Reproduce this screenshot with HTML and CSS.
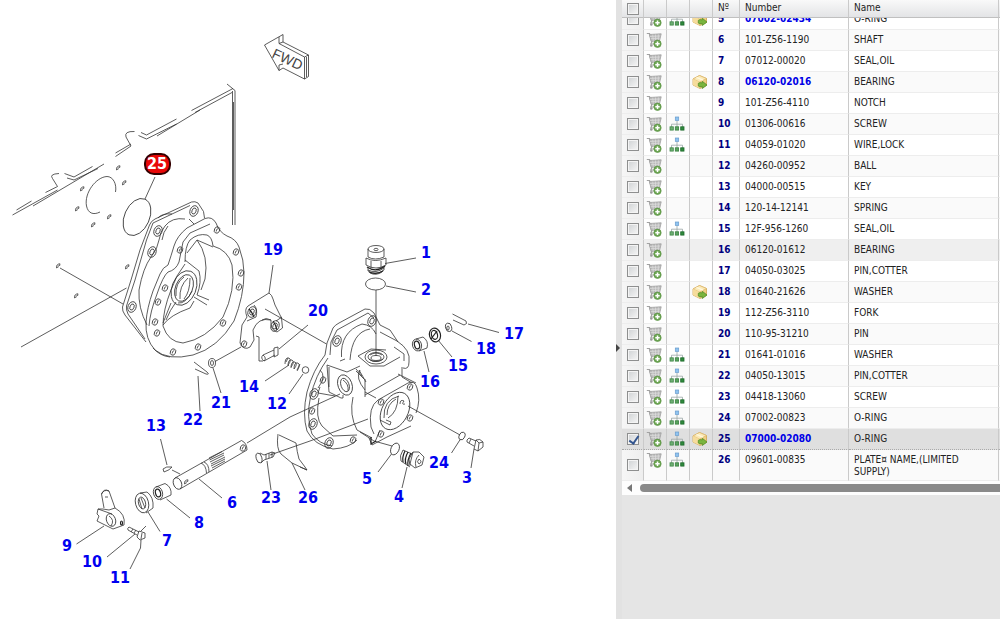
FILE: index.html
```html
<!DOCTYPE html>
<html lang="en">
<head>
<meta charset="utf-8">
<title>Parts catalogue</title>
<link rel="stylesheet" href="styles.css">
</head>
<body>
<svg class="sprite" aria-hidden="true">
  <symbol id="cart" viewBox="0 0 16 16">
    <path d="M.8 1.500h2.700l2.300 8.500-1 2h7" fill="none" stroke="#a2a2a2" stroke-width="1.200"/>
    <path d="M3.300 2.500 15.200 1.800 13.600 8.500 5.200 9.500z" fill="#b9b9b9" stroke="#a0a0a0" stroke-width=".8"/>
    <path d="M4 4.500 14.200 4M4.700 6.700 13.700 6.200M9.500 2.500v6M12.300 2.300v6M6.700 2.700l.6 6" stroke="#dedede" stroke-width=".7"/>
    <circle cx="5.300" cy="13.500" r="1.300" fill="#999"/>
    <circle cx="11.500" cy="11.800" r="3.700" fill="#6da653" stroke="#568f3e" stroke-width=".6"/>
    <path d="M11.500 9.600v4.400M9.300 11.800h4.400" stroke="#fff" stroke-width="1.500"/>
  </symbol>
  <symbol id="tree" viewBox="0 0 16 16">
    <path d="M8 4.500V11M2.500 11V8.200h11V11" fill="none" stroke="#9aa6a6" stroke-width=".8"/>
    <rect x="6.300" y="1" width="3.400" height="3.400" fill="#8fc4f0" stroke="#6a9ccc" stroke-width=".7"/>
    <rect x="1" y="10.800" width="3.300" height="3.300" fill="#6fae74" stroke="#3f8848" stroke-width=".8"/>
    <rect x="6.300" y="10.800" width="3.300" height="3.300" fill="#5aa45f" stroke="#37803f" stroke-width=".8"/>
    <rect x="11.700" y="10.800" width="3.300" height="3.300" fill="#2f8a3c" stroke="#1f6a2c" stroke-width=".8"/>
  </symbol>
  <symbol id="box" viewBox="0 0 16 16">
    <path d="M1 5 7.500 1.500 14.500 4.500v7L8 14.500l-7-3.500z" fill="#f0cf85" stroke="#d0a44f" stroke-width=".8"/>
    <path d="M1 5 7.500 1.500 14.500 4.500 7.500 8z" fill="#fbe9b8" stroke="#dab465" stroke-width=".6"/>
    <path d="M7.500 8V14.300L1 11V5z" fill="#f6dc9c"/>
    <path d="M4.500 3.300 11 6.200" stroke="#fff8dd" stroke-width="1.300"/>
    <path d="M6.300 9.300Q8 8 10.300 9V7.300l4.700 3.700-4.700 3.500v-2Q7.500 13.500 6.300 12z" fill="#7ab53e" stroke="#558f2a" stroke-width=".8"/>
  </symbol>
</svg>
<main class="layout">
  <section class="drawing" aria-label="Assembly drawing">
    <svg class="scheme" viewBox="0 0 616 619" role="img" aria-label="Exploded view of the gear housing">
      <defs>
        <g id="hole"><ellipse rx="2.600" ry="3.300" transform="rotate(25)"/><path d="M-.8 1.500Q-1-1 1.300-1.500"/></g>
        <g id="bolt-hole"><ellipse rx="4" ry="5.500" transform="rotate(22)"/><ellipse rx="2" ry="3.200" transform="rotate(22)"/></g>
        <path id="tick" d="M-1.500 2.200Q-2-2 2-2.200L1.500 0M-.5 2 .5-.5"/>
      </defs>
      <g class="ink">
        <path d="M264.500 45 283 34.500V42L308.500 55V76.500L304.500 79 283 68 279 70.500ZM283 42l-4 1.500 25.500 13.500V79M304.500 57l4-2M279 43.500V37M279 70.500V65l4-1M306.500 57v20"/>
        <path d="M227 84 235 90.500V225M232.500 91V225M233.500 102V210M233 88.500 191.500 110.500M232 92.500 195 112.500M200 110 157 136M176.500 119 146.500 135 141 132.500M176.500 124 146.500 139 138.500 135.500M134.500 131.500Q124 131 126 137L131 146 115.500 156.500M131 144 115.500 153M104 164 33 206M92.500 166.500 74 177 64.500 173.500M98 168.500 74 180 67 178M59 173.500Q49 174 52.500 178.500L57.500 186.500 45.500 192.500M57.500 190 12.500 215M31.500 201 16.500 210"/>
        <path d="M115.500 192C117 184 113 176.500 107 176.500 96 177 84 193 86.500 206 88 213 93 215.500 100 212"/>
        <ellipse cx="137" cy="217" rx="12.500" ry="19.500" transform="rotate(24 137 217)"/>
        <path d="M155 177 145 199M60 268 123 304M21 347 126.500 288"/>
        <use href="#tick" x="118" y="168"/><use href="#tick" x="124" y="183"/><use href="#tick" x="82" y="189"/><use href="#tick" x="77" y="209"/><use href="#tick" x="109" y="217"/><use href="#tick" x="93" y="225"/><use href="#tick" x="127" y="267"/><use href="#tick" x="76" y="296"/><use href="#tick" x="58" y="266"/>

        <path d="M146 342 125 315Q122 311 122.500 307L131 280 140 250 149.500 225Q151 221 155 219L191.500 202Q195 201 198 203L203.500 211.500 204.500 218M145 339 128 314Q126 310 126.500 306L135 280 146.500 240 153 223 190 205.500M158 218Q162 213 172 214M189 219 194 224"/>
        <use href="#bolt-hole" x="194" y="211"/><use href="#bolt-hole" x="158" y="231"/><use href="#bolt-hole" x="152" y="252"/><use href="#bolt-hole" x="132" y="307"/>
        <path d="M185 219Q172 217 165 226 160 232 159 240 158 248 151 257 143 268 139 290 138 308 147 325M162 240Q163 232 168 226"/>
        <path d="M146 322Q147 308 153 291L160 274Q163 267 168 265 171 256 174 246 177 236 187 228L205 218.500Q212 216 216 223 219 232 227 236 236 239 239 247 244 260 244 273 244 296 234 321 218 348 193 355 168 361 155 350 145 339 146 322ZM149 326Q150 312 157 294 163 276 168 272 176 270 179 262L183 242 190 233 210 224M153 348Q160 356 170 357"/>
        <path d="M185 262Q185 246 190 240 198 233 207 235 212 237 213 246 228 250 232 265 236 290 223 317 206 339 183 343 168 342 163 326 163 310 171 290 176 275 185 264M197 240 213 247M197 240Q209 256 205 279L201 290M187 253 197 240M185 260 199 271Q202 282 197 295L209 300M194 297 207 305M163 325Q170 315 190 308M171 303 163 323M190 308 194 301M176 302Q170 310 166 320"/>
        <ellipse cx="184" cy="288" rx="12" ry="18" transform="rotate(22 184 288)"/>
        <ellipse cx="184" cy="288" rx="8.500" ry="14" transform="rotate(22 184 288)"/>
        <path d="M176 296Q175 283 184 277M180 299Q179 286 188 278M184 299Q190 292 190 278M178 303Q186 304 192 291"/>
        <use href="#hole" x="180" y="250"/><use href="#hole" x="217" y="230"/><use href="#hole" x="236" y="252"/><use href="#hole" x="241" y="273"/><use href="#hole" x="239" y="287"/><use href="#hole" x="223" y="323"/><use href="#hole" x="198" y="347"/><use href="#hole" x="173" y="352"/><use href="#hole" x="157" y="333"/><use href="#hole" x="155" y="322"/><use href="#hole" x="158" y="302"/><use href="#hole" x="165" y="288"/>

        <path d="M273 265 269 293M248 306 269 293Q272 295 273 299L275 305 281.500 318 282.500 328 277 332Q270 330 271 320 258 317 253 330L254 340 250 347Q244 351 240 343L242 325 247 317Q244 309 248 306M254 305Q258 309 256 317L247 321M265 309 326.500 344M256 336l3 1v24l4 0M271 320Q266 317 262 320M282 317 276 321"/>
        <use href="#bolt-hole" x="252" y="312"/><use href="#bolt-hole" x="275" y="326"/><use href="#hole" x="244" y="344"/>
        <path class="bold" d="M249 309Q252 312 254 317M273 321Q276 325 277 330"/>
        <path d="M263 355 274 350M264 361 275 355M263 355Q260 358 264 361 267 358 263 355M274 348 278 347V355L274 357ZM308 325 279 349M265 381 289 365M289 394 303 374"/>
        <path d="M285 364Q285 357 289 358 292 360 288 365M288 366Q288 359 292 360 295 362 291 367M291 368Q291 361 295 362 298 364 294 369M294 369Q294 362 298 363 301 365 297 371M286 362 288 358M297 370 300 364"/>
        <circle cx="305.500" cy="370" r="3.300"/>
        <ellipse cx="212" cy="363" rx="3.500" ry="4.500"/><ellipse cx="212" cy="363" rx="1.500" ry="2.500"/>
        <path d="M215 361.500 241 347M221 393 213 368M194 362 207 372M195 369 206 374Q210 375 207 372M200 411 198 376M160.500 439 167 465"/>

        <path d="M368 249V257M384 249V257M366 258Q375 263 386 258V265Q376 271 366 265ZM371 261V268M381 261V268M368 257Q375 261 384 257M368 268V271Q376 276 384 270V267M368 270Q376 274 384 268M370 273Q376 276 382 272M385 263.500 416 258M386 286 416 292M376 290V356"/>
        <ellipse cx="376" cy="249" rx="8" ry="3.500"/><ellipse cx="376" cy="249.500" rx="2" ry="1.200"/><ellipse cx="375.500" cy="284" rx="10" ry="6"/>
        <path class="bold" d="M367 267Q376 273 385 266M369 272Q376 275 383 271"/>

        <path d="M325 355 327 343 333 328Q335 325 339 323L365 309Q370 308 374 313L380 325 390 330 398 342M330 355 331 342 337 330 368 313 374 318M325 355Q313 370 307 392 302 414 307 431 314 445 333 449 349 448 357 440M328 358Q315 376 310.500 397 306 417 312 434 319 444 332 446"/>
        <path d="M341.500 357Q340 332 362 324M350 360Q352 332 370 329M362 324Q372 325 376 334M380 332 397 341Q411 350 409 362 409 370 403 368M402 367V377M394 347 404 354V361M358 356 371 349 386 350M358 356 370 366 384 366 400 357M345 359 340 361M327 365 347 372 360 366M360 370Q355 378 365 390M365 397V379M362 376 356 369M365 395 400 375M398 374 416 383M365 392 376 398M402 377 412 383"/>
        <ellipse cx="376" cy="357" rx="11" ry="7"/><ellipse cx="376" cy="357" rx="8" ry="4.500"/><ellipse cx="376" cy="358" rx="5" ry="2.500"/>
        <path d="M369 359Q375 364 383 359M370 355Q376 351 382 355"/>
        <ellipse cx="345" cy="385" rx="7" ry="10.500" transform="rotate(-20 345 385)"/><ellipse cx="345" cy="385" rx="4" ry="7" transform="rotate(-20 345 385)"/>
        <path d="M343 380Q349 384 348 391M327 365 329 392 341 398H343V395M329 367V387M320 387 318 393 335 396M353 397Q349 415 357 430M319 398Q315 418 322 426L333 436 357 435M357 430 372 438M360 432 374 441 392 446M320 370Q327 376 318 388"/>
        <use href="#bolt-hole" x="337" y="341"/><use href="#bolt-hole" x="372" y="321"/><use href="#hole" x="323" y="380"/><use href="#bolt-hole" x="314" y="394"/><use href="#hole" x="312" y="411"/><use href="#bolt-hole" x="313" y="424"/><use href="#bolt-hole" x="329" y="443"/><use href="#hole" x="353" y="440"/>
        <path d="M371 427Q368 407 378 400L408 383Q415 380 417 388 421 400 416 413M411 426 387 437 372 445 369 438M371 427 374 434M375 442 380 430M356 371 364 379M359 370 366 382"/>
        <ellipse cx="395" cy="411" rx="13" ry="20" transform="rotate(28 395 411)"/>
        <path d="M384 418Q383 400 399 396M387 415Q387 404 396 399M386 420 391 422 390 425 380 420M388 418Q398 412 398 396M400 404Q400 399 404 401 401 405 405 404"/>
        <use href="#hole" x="381" y="402"/><use href="#hole" x="410" y="387"/><use href="#hole" x="410" y="418"/><use href="#hole" x="381" y="434"/>
        <path class="bold" d="M371 437V444L376 441"/>
        <path d="M247 443 290 417 340 394M270 455 310 441 368 419M408 406 460 435"/>

        <ellipse cx="462" cy="436" rx="2.800" ry="4" transform="rotate(25 462 436)"/><ellipse cx="395" cy="449" rx="4" ry="6.200" transform="rotate(25 395 449)"/>
        <path d="M451.500 453 460.500 439M471 468 474 449M378 472 391.500 454M407 467 402 488"/>
        <path d="M469 438 476 441M467 442 474 446M469 438Q466 440 467 442M471 439 469 443M476 440Q480 438 483 442L483 447 478 451 474 449ZM476 440 479 443 478 451M479 443 483 442"/>
        <path d="M403 450 412 454M401 461 410 467M403 450Q399 456 401 461M413 452 419 452 424 457 422 465 415 468 410 464ZM413 452 409 459 410 466M419 455Q414 460 416 467"/>
        <path class="bold" d="M405 451Q402 457 403 462M408 452Q404 459 406 464M411 453Q407 460 408 466"/>
        <path d="M419 459Q416 462 419 464 423 462 419 459"/>

        <ellipse cx="417" cy="345" rx="4.500" ry="6" transform="rotate(-15 417 345)"/>
        <path d="M416 339 423 337Q429 341 427 348L419 351M424 351 429 372M438 340 452 357M452 331 471.500 341.500M468 324 499 332.500M452.500 314 466 321M453 320 464 325Q468 324 466 321"/>
        <ellipse class="bold" cx="417" cy="345" rx="2.500" ry="4" transform="rotate(-15 417 345)"/>
        <ellipse class="bold" cx="435" cy="335" rx="5.500" ry="7" transform="rotate(-15 435 335)"/><ellipse class="bold" cx="434.500" cy="335" rx="3" ry="4.500" transform="rotate(-15 434 335)"/><path class="bold" d="M431 339 437 331"/>
        <ellipse cx="448.500" cy="327.500" rx="3" ry="4.300" transform="rotate(-15 448 327)"/><ellipse cx="448" cy="328" rx="1.200" ry="2"/>

        <path d="M175 478 241.500 440.500Q247 443 247 450L180 489"/>
        <ellipse cx="177.500" cy="483.500" rx="4" ry="6" transform="rotate(-22 177.500 483.500)"/><use href="#tick" x="186" y="482"/><use href="#hole" x="243" y="448"/>
        <path d="M201 463Q206 465 206.500 473M204 462Q209 464 209 472M209 458 222 451.500M209.500 460 224 453M210 462 224 455M211 464 225 457M211 466 225 459M212 468 225 461M199 479 222 498M163 469Q166 466 172 467 170 470 164 472ZM172 470 180 474"/>
        <ellipse cx="158" cy="493" rx="4.500" ry="6.500" transform="rotate(-15 158 493)"/><ellipse class="bold" cx="158" cy="493" rx="2.500" ry="4" transform="rotate(-15 158 493)"/>
        <path d="M156 487 165 483.500Q172 487 171 495L160 500M166.500 499 190 518M148 512 160 531.500M76.500 544 104 526M107 557 135 534"/>
        <ellipse cx="142" cy="503" rx="6.500" ry="10" transform="rotate(-15 142 503)"/><ellipse cx="142" cy="503" rx="3.500" ry="6" transform="rotate(-15 142 503)"/><path d="M140 493 147 492Q154 497 153 508L146 513M141 498 145 508M139 499 142 509"/>
        <path d="M104 508 101.500 494Q104 488 109 491L115 508M101.500 494Q104 489 109 491M103 509 98 509 97 514 99 516 97 521 113 529 124 525Q126 514 115 508L109 510ZM98 509 112 514M105 497H108"/>
        <ellipse cx="111" cy="520" rx="4.500" ry="6.500" transform="rotate(-20 111 520)"/><path d="M109 516Q115 520 111 526"/><ellipse class="bold" cx="121.500" cy="523" rx="1" ry="2"/>
        <path d="M129 527 139 532M128 530 137 535M129 527Q127 528 128 530M133 529 131 532M136 530 134 533M139 531 145 533 145 538 140 540 137 537ZM142 533 141 539M146 526 141 531M141 540 140.500 548 130 569"/>
        <ellipse cx="259" cy="458" rx="2.800" ry="5" transform="rotate(-15 259 458)"/>
        <path d="M260 453 264 455 272 452 275 453 273 457 264 460 261 463M266 454V459M269 453V458M272 452V457M267 461 271 490M292 463 305 490M278 434Q276 449 281 454L292 463 307 470 300 467M279 435 296 443Q297 452 299 459L305 467 307 470"/>
      </g>
      <text class="direction" transform="translate(271 57) rotate(25)">FWD</text>
      <g class="callouts">
        <text x="273" y="255">19</text><text x="426" y="258">1</text><text x="426" y="295">2</text><text x="318" y="316">20</text><text x="514" y="339">17</text><text x="486" y="354">18</text><text x="458" y="371">15</text><text x="430" y="387">16</text><text x="249" y="392">14</text><text x="277" y="409">12</text><text x="221" y="408">21</text><text x="193" y="425">22</text><text x="156" y="431">13</text><text x="439" y="468">24</text><text x="367" y="484">5</text><text x="467" y="483">3</text><text x="399" y="502">4</text><text x="271" y="503">23</text><text x="308" y="503">26</text><text x="232" y="508">6</text><text x="199" y="528">8</text><text x="167" y="546">7</text><text x="67" y="551">9</text><text x="92" y="567">10</text><text x="120" y="583">11</text>
      </g>
      <g class="callout-active">
        <rect x="145" y="154" width="25" height="20" rx="9"/>
        <text x="157" y="169">25</text>
      </g>
    </svg>
  </section>
  <div class="splitter"><button class="collapse" type="button" aria-label="Collapse parts list"></button></div>
  <section class="parts" aria-label="Parts list">
    <table class="grid grid-head">
      <colgroup><col class="c-check"><col class="c-icon"><col class="c-icon"><col class="c-icon"><col class="c-pos"><col class="c-number"><col class="c-name"><col></colgroup>
      <thead><tr><th class="check"><input type="checkbox" aria-label="Select all"></th><th></th><th></th><th></th><th>Nº</th><th>Number</th><th>Name</th><th></th></tr></thead>
    </table>
    <div class="grid-view">
      <table class="grid grid-body">
        <colgroup><col class="c-check"><col class="c-icon"><col class="c-icon"><col class="c-icon"><col class="c-pos"><col class="c-number"><col class="c-name"><col></colgroup>
        <tbody>
          <tr><td class="check"><input type="checkbox" aria-label="Select 5"></td><td class="icon"><svg><use href="#cart"/></svg></td><td class="icon"><svg><use href="#tree"/></svg></td><td class="icon"><svg><use href="#box"/></svg></td><td class="pos">5</td><td><a href="#p5">07002-02434</a></td><td>O-RING</td><td></td></tr>
          <tr><td class="check"><input type="checkbox" aria-label="Select 6"></td><td class="icon"><svg><use href="#cart"/></svg></td><td></td><td></td><td class="pos">6</td><td>101-Z56-1190</td><td>SHAFT</td><td></td></tr>
          <tr><td class="check"><input type="checkbox" aria-label="Select 7"></td><td class="icon"><svg><use href="#cart"/></svg></td><td></td><td></td><td class="pos">7</td><td>07012-00020</td><td>SEAL,OIL</td><td></td></tr>
          <tr><td class="check"><input type="checkbox" aria-label="Select 8"></td><td class="icon"><svg><use href="#cart"/></svg></td><td></td><td class="icon"><svg><use href="#box"/></svg></td><td class="pos">8</td><td><a href="#p8">06120-02016</a></td><td>BEARING</td><td></td></tr>
          <tr><td class="check"><input type="checkbox" aria-label="Select 9"></td><td class="icon"><svg><use href="#cart"/></svg></td><td></td><td></td><td class="pos">9</td><td>101-Z56-4110</td><td>NOTCH</td><td></td></tr>
          <tr><td class="check"><input type="checkbox" aria-label="Select 10"></td><td class="icon"><svg><use href="#cart"/></svg></td><td class="icon"><svg><use href="#tree"/></svg></td><td></td><td class="pos">10</td><td>01306-00616</td><td>SCREW</td><td></td></tr>
          <tr><td class="check"><input type="checkbox" aria-label="Select 11"></td><td class="icon"><svg><use href="#cart"/></svg></td><td class="icon"><svg><use href="#tree"/></svg></td><td></td><td class="pos">11</td><td>04059-01020</td><td>WIRE,LOCK</td><td></td></tr>
          <tr><td class="check"><input type="checkbox" aria-label="Select 12"></td><td class="icon"><svg><use href="#cart"/></svg></td><td></td><td></td><td class="pos">12</td><td>04260-00952</td><td>BALL</td><td></td></tr>
          <tr><td class="check"><input type="checkbox" aria-label="Select 13"></td><td class="icon"><svg><use href="#cart"/></svg></td><td></td><td></td><td class="pos">13</td><td>04000-00515</td><td>KEY</td><td></td></tr>
          <tr><td class="check"><input type="checkbox" aria-label="Select 14"></td><td class="icon"><svg><use href="#cart"/></svg></td><td></td><td></td><td class="pos">14</td><td>120-14-12141</td><td>SPRING</td><td></td></tr>
          <tr><td class="check"><input type="checkbox" aria-label="Select 15"></td><td class="icon"><svg><use href="#cart"/></svg></td><td class="icon"><svg><use href="#tree"/></svg></td><td></td><td class="pos">15</td><td>12F-956-1260</td><td>SEAL,OIL</td><td></td></tr>
          <tr class="hovered"><td class="check"><input type="checkbox" aria-label="Select 16"></td><td class="icon"><svg><use href="#cart"/></svg></td><td></td><td></td><td class="pos">16</td><td>06120-01612</td><td>BEARING</td><td></td></tr>
          <tr><td class="check"><input type="checkbox" aria-label="Select 17"></td><td class="icon"><svg><use href="#cart"/></svg></td><td></td><td></td><td class="pos">17</td><td>04050-03025</td><td>PIN,COTTER</td><td></td></tr>
          <tr><td class="check"><input type="checkbox" aria-label="Select 18"></td><td class="icon"><svg><use href="#cart"/></svg></td><td></td><td class="icon"><svg><use href="#box"/></svg></td><td class="pos">18</td><td>01640-21626</td><td>WASHER</td><td></td></tr>
          <tr><td class="check"><input type="checkbox" aria-label="Select 19"></td><td class="icon"><svg><use href="#cart"/></svg></td><td></td><td></td><td class="pos">19</td><td>112-Z56-3110</td><td>FORK</td><td></td></tr>
          <tr><td class="check"><input type="checkbox" aria-label="Select 20"></td><td class="icon"><svg><use href="#cart"/></svg></td><td></td><td></td><td class="pos">20</td><td>110-95-31210</td><td>PIN</td><td></td></tr>
          <tr><td class="check"><input type="checkbox" aria-label="Select 21"></td><td class="icon"><svg><use href="#cart"/></svg></td><td class="icon"><svg><use href="#tree"/></svg></td><td></td><td class="pos">21</td><td>01641-01016</td><td>WASHER</td><td></td></tr>
          <tr><td class="check"><input type="checkbox" aria-label="Select 22"></td><td class="icon"><svg><use href="#cart"/></svg></td><td class="icon"><svg><use href="#tree"/></svg></td><td></td><td class="pos">22</td><td>04050-13015</td><td>PIN,COTTER</td><td></td></tr>
          <tr><td class="check"><input type="checkbox" aria-label="Select 23"></td><td class="icon"><svg><use href="#cart"/></svg></td><td class="icon"><svg><use href="#tree"/></svg></td><td></td><td class="pos">23</td><td>04418-13060</td><td>SCREW</td><td></td></tr>
          <tr><td class="check"><input type="checkbox" aria-label="Select 24"></td><td class="icon"><svg><use href="#cart"/></svg></td><td class="icon"><svg><use href="#tree"/></svg></td><td></td><td class="pos">24</td><td>07002-00823</td><td>O-RING</td><td></td></tr>
          <tr class="selected"><td class="check"><input type="checkbox" checked aria-label="Select 25"></td><td class="icon"><svg><use href="#cart"/></svg></td><td class="icon"><svg><use href="#tree"/></svg></td><td class="icon"><svg><use href="#box"/></svg></td><td class="pos">25</td><td><a href="#p25">07000-02080</a></td><td>O-RING</td><td></td></tr>
          <tr><td class="check"><input type="checkbox" aria-label="Select 26"></td><td class="icon"><svg><use href="#cart"/></svg></td><td class="icon"><svg><use href="#tree"/></svg></td><td></td><td class="pos">26</td><td>09601-00835</td><td>PLATE¤ NAME,(LIMITED SUPPLY)</td><td></td></tr>
        </tbody>
      </table>
    </div>
    <div class="scrollbar"><button class="scroll-left" type="button" aria-label="Scroll left"></button><div class="thumb"></div></div>
  </section>
</main>
</body>
</html>
```
FILE: styles.css
```css
* {
  box-sizing: border-box;
}

body {
  margin: 0;
  background: #fff;
  color: #222;
  font: 10px/12px "DejaVu Sans Condensed", "Noto Sans", sans-serif;
}

.sprite {
  display: block;
  width: 0;
  height: 0;
}

.layout {
  display: flex;
  min-height: 100vh;
}

.drawing {
  flex: 1;
  min-width: 0;
}

.scheme {
  display: block;
  width: 100%;
}

.ink {
  fill: none;
  stroke: #333;
  stroke-width: 0.8;
}

.bold {
  stroke: #222;
  stroke-width: 1.2;
}

.direction {
  fill: #444;
  font: 14px "Liberation Sans", sans-serif;
}

.callouts,
.callout-active {
  font: bold 16px "DejaVu Sans Condensed", sans-serif;
  text-anchor: middle;
}

.callouts {
  fill: #0000f0;
}

.callout-active rect {
  fill: #e80808;
  stroke: #300;
  stroke-width: 2;
}

.callout-active text {
  fill: #fff;
}

.splitter {
  display: flex;
  align-items: center;
  flex: 0 0 6px;
  padding-top: 76px;
  background: #e2e2e2;
}

.collapse,
.scroll-left {
  padding: 0;
  border: solid transparent;
  background: none;
}

.collapse {
  width: 5px;
  height: 8px;
  border-width: 4px 0 4px 4px;
  border-left-color: #444;
}

.parts {
  flex: 0 0 378px;
  min-width: 0;
  background: #e5e5e5;
}

.grid {
  width: 100%;
  table-layout: fixed;
  border-collapse: separate;
  border-spacing: 0;
  text-align: left;
}

.c-check {
  width: 22px;
}

.c-icon {
  width: 23px;
}

.c-pos {
  width: 27px;
}

.c-number {
  width: 109px;
}

.c-name {
  width: 150px;
}

.grid th,
.grid td {
  padding: 4px 5px 2px;
  border-right: 1px solid #cacaca;
}

.grid th:last-child,
.grid td:last-child {
  padding: 0;
  border-right: 0;
}

.grid th {
  height: 18px;
  padding-top: 1px;
  padding-bottom: 3px;
  border-bottom: 1px solid #c0c0c0;
  background: linear-gradient(#f9f9f9, #e3e4e6);
  font-weight: normal;
}

.grid-view {
  overflow: hidden;
}

.grid-body {
  margin-top: -9px;
  background: #fff;
}

.grid td {
  height: 21px;
  border-bottom: 1px solid #ededed;
  vertical-align: top;
}

.grid tr:nth-child(even) td {
  background: #fafafa;
}

.grid .check {
  padding: 0 0 0 5px;
  vertical-align: middle;
}

.grid td.check,
.grid tr:nth-child(even) td.check {
  background: linear-gradient(to right, #f6f6f6, #eee);
}

.grid .icon {
  padding: 2px 0 0 2px;
}

.grid tr.hovered td {
  background: #efefef;
}

.grid tr.selected td {
  border-bottom: 1px dotted #aaa;
  background: #dfdfdf;
}

.icon svg {
  display: block;
  width: 16px;
  height: 16px;
}

.pos {
  color: #000080;
  font-weight: bold;
}

.grid a {
  color: #0000e6;
  font-weight: bold;
  text-decoration: none;
}

input[type="checkbox"] {
  display: block;
  width: 12px;
  height: 12px;
  margin: 0;
  appearance: none;
  border: 1px solid #8e8f8f;
  background: linear-gradient(135deg, #cfd2d4, #f6f6f6);
  box-shadow: inset 0 0 0 1px #f4f4f4;
}

input[type="checkbox"]:checked::after {
  content: "";
  display: block;
  width: 4px;
  height: 8px;
  margin: 0 0 0 3px;
  border: solid #33558f;
  border-width: 0 2px 2px 0;
  transform: rotate(35deg);
}

.scrollbar {
  display: flex;
  align-items: center;
  gap: 8px;
  height: 14px;
  padding-left: 5px;
  background: #fdfdfd;
}

.scroll-left {
  width: 5px;
  height: 8px;
  border-width: 4px 5px 4px 0;
  border-right-color: #777;
}

.thumb {
  flex: 1;
  height: 8px;
  border-radius: 4px 0 0 4px;
  background: #8a8a8a;
}
```
